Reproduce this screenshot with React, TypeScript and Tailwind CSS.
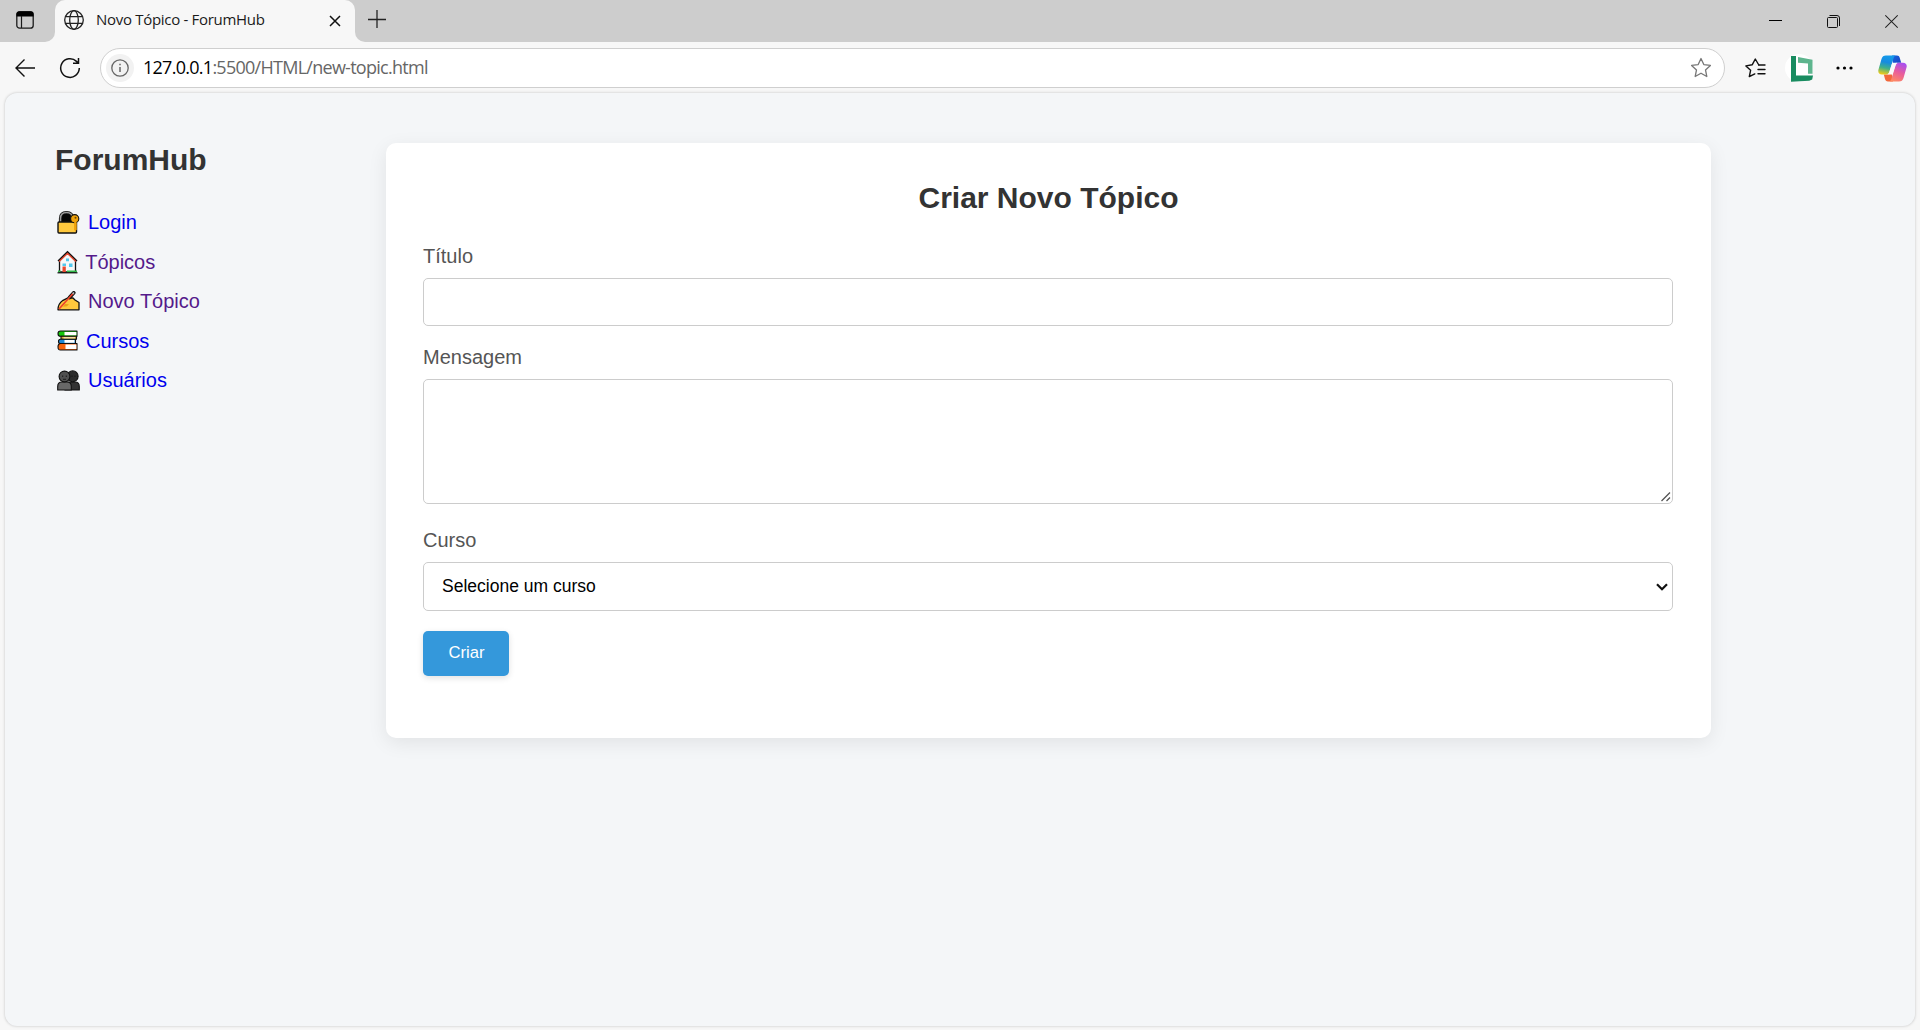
import React from "react";

type IconProps = { className?: string };

const TabActionsIcon = () => (
  <svg width="18" height="18" viewBox="0 0 18 18">
    <rect x="0.8" y="0.8" width="16.4" height="16.4" rx="2.8" fill="none" stroke="#1b1b1b" strokeWidth="1.3" />
    <path d="M0.5 5.5V3A2.8 2.8 0 0 1 3.3.2h11.4A2.8 2.8 0 0 1 17.5 3v2.5z" fill="#000" />
    <path d="M5.5 5v12" stroke="#1b1b1b" strokeWidth="1.2" />
  </svg>
);

const GlobeIcon = () => (
  <svg width="20" height="20" viewBox="0 0 20 20" fill="none" stroke="#222" strokeWidth="1.3">
    <circle cx="10" cy="10" r="9.3" />
    <ellipse cx="10" cy="10" rx="4.3" ry="9.3" />
    <path d="M1.5 6.7h17M1.5 13.3h17" />
  </svg>
);

const StarIcon = ({ className }: IconProps) => (
  <svg width="22" height="22" viewBox="0 0 22 22" fill="none" strokeWidth="1.3" strokeLinejoin="round" className={className}>
    <path d="M11 1.5l2.8 6.100 6.600.8-4.900 4.500 1.300 6.600-5.800-3.300-5.800 3.300 1.300-6.600-4.900-4.500 6.600-.8z" />
  </svg>
);

const FavoritesIcon = () => (
  <svg width="22" height="20" viewBox="0 0 22 20" fill="none" stroke="#111" strokeWidth="1.4" strokeLinejoin="round" strokeLinecap="round">
    <path d="M13.8 7L10.3 1 7.300 6.700.9 7.900l4.700 4.400-1.300 6.300 5.500-2.700" />
    <path d="M13.8 7H20M13 11.5h7M13 15.7h7" />
  </svg>
);

const ExtensionIcon = () => (
  <svg width="28" height="28" viewBox="0 0 28 28">
    <circle cx="14" cy="14" r="14" fill="#fff" />
    <path d="M6 2h5v19.500h17l-.8 4-3 1.200L6 27.800z" fill="#198c60" />
    <path d="M13 3l14.500 2.800v14H23V9.500L13 8.800z" fill="#5eb58e" />
  </svg>
);

const CopilotIcon = () => (
  <svg width="29" height="27" viewBox="0 0 29 27">
    <defs>
      <linearGradient id="cpA" x1="0.5" y1="0" x2="0.3" y2="1">
        <stop offset="0" stopColor="#159bea" />
        <stop offset="0.35" stopColor="#168be0" />
        <stop offset="0.65" stopColor="#3fb08a" />
        <stop offset="1" stopColor="#f3cc16" />
      </linearGradient>
      <linearGradient id="cpB" x1="0.7" y1="0" x2="0.3" y2="1">
        <stop offset="0" stopColor="#a84ff0" />
        <stop offset="0.5" stopColor="#e95d9b" />
        <stop offset="1" stopColor="#ff8a63" />
      </linearGradient>
      <linearGradient id="cpC" x1="0" y1="0" x2="1" y2="1">
        <stop offset="0" stopColor="#1767dd" />
        <stop offset="1" stopColor="#1c3fc0" />
      </linearGradient>
    </defs>
    <path d="M14 .5h5c1.500 0 2.300.9 2.700 2.200l1.500 5h-4.500c-2 0-3 .8-3.500 2.500z" fill="url(#cpC)" />
    <path d="M15 26.500h-5c-1.800 0-2.500-1-3-2.500l-1.200-4.500H10c2 0 3-1 3.500-2.500z" fill="#f2683b" />
    <path d="M8 .5h10c-1.400.3-2 1.300-2.500 3l-4.200 13.300c-.6 1.900-1.700 2.700-3.500 2.700H4c-3 0-4.300-2.200-3.500-5L3.500 4C4.200 1.600 5.600.5 8 .5z" fill="url(#cpA)" />
    <path d="M21 26.500H11c1.400-.3 2-1.300 2.500-3l4.200-13.300c.6-1.700 1.700-2.500 3.500-2.500H25c3 0 4.300 2 3.500 4.800L25.500 23c-.7 2.400-2.100 3.500-4.500 3.500z" fill="url(#cpB)" />
    <path d="M14.300 7.700h4.900c-1 .4-1.400 1.200-1.800 2.500l-3 9.300H9.600c1-.5 1.400-1.300 1.800-2.600z" fill="#fafafa" />
  </svg>
);

const LockEmoji = () => (
  <svg width="23" height="24" viewBox="0 0 23 24" strokeLinejoin="round">
    <path d="M3.500 12V8.500C3.500 4.500 6 2.500 9.500 2.500s6 2 6 6V12" fill="#050505" stroke="#111" strokeWidth="3.200" />
    <path d="M3.500 12V8.500c0-4 2.500-6 6-6s6 2 6 6" fill="none" stroke="#9b9b9b" strokeWidth="1.500" />
    <rect x="1" y="12" width="18.500" height="11" rx="1" fill="#ffc83d" stroke="#111" strokeWidth="1.400" />
    <path d="M17.200 11h2.300v9l-1.150 1-1.150-1z" fill="#efa30c" />
    <circle cx="17.700" cy="8.700" r="4.100" fill="#efa30c" stroke="#111" strokeWidth="1.100" />
    <path d="M17.200 12h2.300v8h-2.300z" fill="#efa30c" />
    <circle cx="18.500" cy="7.800" r="1" fill="#6a4706" />
  </svg>
);

const HouseEmoji = () => (
  <svg width="21" height="24" viewBox="0 0 21 24">
    <path d="M2.500 10.500L10.500 3l8 7.500V22h-16z" fill="#f7f7f7" stroke="#111" strokeWidth="1.300" />
    <path d="M1 11L10.500 1.700 20 11" fill="none" stroke="#111" strokeWidth="1.400" />
    <path d="M2.200 11.500L10.500 3.400l8.300 8.100" fill="none" stroke="#ed4b32" strokeWidth="1.300" />
    <path d="M9 8.500h3v2.800H9zM12 13.500h3.500V17H12zM5.500 13.500H9V16H5.500z" fill="#50c8ee" />
    <path d="M5.500 16.500h3.300V22H5.500z" fill="#e8472c" />
    <path d="M1 20.500h2.500v2H1zM10 20.500h10v2H10z" fill="#32b84a" />
    <path d="M.5 22.800h20" stroke="#111" strokeWidth="1.200" />
  </svg>
);

const WritingEmoji = () => (
  <svg width="23" height="20" viewBox="0 0 23 20" strokeLinejoin="round">
    <path d="M1 18.800c0-4 2-7.500 5-9.500l5-2.500 5 .2 2 2 4 2.500v7.300z" fill="#ffc83d" stroke="#111" strokeWidth="1.300" />
    <path d="M8 13l4 .3-2 2-4 .5z" fill="#e8a317" />
    <path d="M12.500 6.500L16.800 1.800" stroke="#111" strokeWidth="3.600" strokeLinecap="round" />
    <path d="M2 18L16 2.500" stroke="#ee432d" strokeWidth="1.700" />
    <path d="M15.700 2.900l1.300-1.400" stroke="#bbb" strokeWidth="1.700" />
  </svg>
);

const BooksEmoji = () => (
  <svg width="21" height="21" viewBox="0 0 21 21" strokeLinejoin="round">
    <g stroke="#111" strokeWidth="1.100">
      <path d="M3.500 1H20v5.300H3.500C1.500 6.300 1 5.500 1 3.700S1.600 1 3.500 1z" fill="#16c60c" />
      <path d="M4 6.300h15.500v3H4z" fill="#d9ac35" />
      <path d="M3.500 9.300h15v4.200h-15c-1.500 0-2-.8-2-2.100s.6-2.100 2-2.100z" fill="#1b87d5" />
      <path d="M3.500 13.500H20V20H3.500C1.600 20 1 19 1 16.800s.6-3.300 2.500-3.300z" fill="#f7630c" />
    </g>
    <path d="M7.500 2H19.400V5.300H7.500zM7.500 10.100h10v2.700h-10zM8.500 14.600H19.400v4.400H8.500z" fill="#fff" />
    <path d="M6.500 7.200H18v1.200H6.500z" fill="#fbecc0" />
  </svg>
);

const PeopleEmoji = () => (
  <svg width="23" height="21" viewBox="0 0 23 21" stroke="#111" strokeWidth="1.100">
    <path d="M8 20v-3.500c0-3 1.500-4.500 4-4.500h6c2.700 0 4.300 1.800 4.300 4.500V20z" fill="#333" />
    <circle cx="15.700" cy="6.300" r="5.400" fill="#2c2c2c" />
    <path d="M.7 20v-3.500C.7 13.700 2.300 12 5 12h5c2.700 0 4.300 1.700 4.300 4.500V20z" fill="#686868" />
    <circle cx="7.500" cy="6.500" r="5.400" fill="#505050" />
    <path d="M5.700 5.500v1.500M9.300 5.500v1.500M15 5.500v1.500M18 5.500v1.500M6 9.300h3" stroke="#151515" strokeWidth=".9" />
  </svg>
);

const links = [
  { label: "Login", icon: <LockEmoji />, box: "w-[33px]", row: "h-[39px]", color: "text-[#0000ee]" },
  { label: "Tópicos", icon: <HouseEmoji />, box: "w-[30.200px]", row: "h-[41px]", color: "text-[#551a8b]" },
  { label: "Novo Tópico", icon: <WritingEmoji />, box: "w-[33px]", row: "h-[38px]", color: "text-[#551a8b]" },
  { label: "Cursos", icon: <BooksEmoji />, box: "w-[31px]", row: "h-[41px]", color: "text-[#0000ee]" },
  { label: "Usuários", icon: <PeopleEmoji />, box: "w-[33px]", row: "h-[38px]", color: "text-[#0000ee]" },
];

function TabStrip() {
  return (
    <div className="flex h-[42px] bg-[#f7f7f7]">
      <div className="flex w-[55px] items-center rounded-br-[10px] bg-[#cdcdcd] pb-[2px] pl-4">
        <TabActionsIcon />
      </div>
      <div className="h-full w-[300px] bg-[#cdcdcd]">
        <div className="flex h-full items-center rounded-t-[10px] bg-[#f7f7f7] pb-[2px] pl-[9px]">
          <GlobeIcon />
          <span className="ml-[12px] w-[233px] pb-[2px] font-['Open_Sans'] text-[15px] tracking-[-0.300px] whitespace-nowrap text-[#1b1b1b]">
            Novo Tópico - ForumHub
          </span>
          <svg width="12" height="12" viewBox="0 0 12 12" className="mt-[1px]" stroke="#111" strokeWidth="1.500">
            <path d="M1 1l10 10M11 1L1 11" />
          </svg>
        </div>
      </div>
      <div className="flex flex-1 rounded-bl-[10px] bg-[#cdcdcd]">
        <svg width="18" height="18" viewBox="0 0 18 18" className="mt-[10px] ml-[13px]" stroke="#222" strokeWidth="1.300">
          <path d="M9 0v18M0 9.500h18" />
        </svg>
        <div className="mt-[14px] mr-[22px] ml-auto flex h-[15px] items-center gap-[45px]">
          <svg width="13" height="15" viewBox="0 0 13 15">
            <path d="M0 6.500h13" stroke="#000" />
          </svg>
          <svg width="13" height="15" viewBox="0 0 13 15" fill="none" stroke="#111">
            <rect x=".5" y="3.500" width="10" height="10" rx="1" />
            <path d="M2.500 1.500H10A2.500 2.500 0 0 1 12.500 4v8" />
          </svg>
          <svg width="13" height="15" viewBox="0 0 13 15" stroke="#222" strokeWidth="1.100">
            <path d="M.3 1.300l12.400 12.400M12.700 1.300L.3 13.700" />
          </svg>
        </div>
      </div>
    </div>
  );
}

function AddressBar() {
  return (
    <div className="flex h-[51px] items-center pt-px">
      <svg width="20" height="20" viewBox="0 0 20 20" className="ml-[15px]" fill="none" stroke="#111" strokeWidth="1.400">
        <path d="M20 10H1M9.500 1.500L1 10l8.500 8.500" />
      </svg>
      <svg width="22" height="22" viewBox="0 0 22 22" className="ml-[24px]" fill="none" stroke="#111" strokeWidth="1.500">
        <path d="M20.300 11a9.300 9.300 0 1 1-2.800-6.600l1.800 1.700M19.500 1v5.300H14" />
      </svg>
      <div className="ml-[19px] flex h-[40px] w-[1625px] items-center rounded-full border border-[#cfcfcf] bg-white pl-[5px]">
        <div className="flex size-[28px] items-center justify-center rounded-full bg-[#f2f2f2]">
          <svg width="18" height="18" viewBox="0 0 18 18" fill="none" stroke="#666" strokeWidth="1.300">
            <circle cx="9" cy="9" r="8.200" />
            <path d="M9 8v5M9 4.700v1.600" strokeWidth="1.500" />
          </svg>
        </div>
        <span className="ml-[9px] pb-px font-['Open_Sans'] text-[18px] tracking-[-0.730px] whitespace-nowrap text-[#666]">
          <span className="text-black">127.0.0.1</span>:5500/HTML/new-topic.html
        </span>
        <StarIcon className="mr-[12px] ml-auto stroke-[#777]" />
      </div>
      <div className="ml-[20px]">
        <FavoritesIcon />
      </div>
      <div className="ml-[18px]">
        <ExtensionIcon />
      </div>
      <svg width="17" height="4" viewBox="0 0 17 4" className="ml-[23px]">
        <circle cx="2" cy="2" r="1.600" />
        <circle cx="8.500" cy="2" r="1.600" />
        <circle cx="15" cy="2" r="1.600" />
      </svg>
      <div className="ml-[25px]">
        <CopilotIcon />
      </div>
    </div>
  );
}

export default function App() {
  return (
    <div className="flex h-[1030px] w-[1920px] flex-col overflow-hidden bg-[#f7f7f7] font-['Liberation_Sans',Arial,sans-serif]">
      <TabStrip />
      <AddressBar />
      <main className="mx-[5px] flex h-[933px] items-start rounded-[12px] bg-[#f4f6f8] shadow-[0_0_3px_rgba(0,0,0,0.220)]">
        <aside className="w-[381px] pt-[49px] pl-[50px]">
          <h1 className="text-[30px] leading-[35px] font-bold text-[#333]">ForumHub</h1>
          <nav className="mt-[25px] text-[20px]">
            {links.map((link) => (
              <a key={link.label} className={`flex items-center ${link.row} ${link.color}`}>
                <span className={`${link.box} shrink-0 pl-[2px]`}>{link.icon}</span>
                {link.label}
              </a>
            ))}
          </nav>
        </aside>
        <section className="mt-[50px] h-[595px] w-[1325px] rounded-[10px] bg-white px-[37px] pt-[37px] shadow-[0_5px_19px_rgba(0,0,0,0.080)]">
          <h2 className="text-center text-[30px] leading-[35px] font-bold text-[#333]">Criar Novo Tópico</h2>
          <form className="flex flex-col items-start text-[20px] leading-[23px] text-[#555]">
            <label className="mt-[30px]">Título</label>
            <input className="mt-[10px] h-[48px] w-[1250px] rounded-[5px] border border-[#ccc] bg-white" />
            <label className="mt-[20px]">Mensagem</label>
            <div className="relative mt-[10px] h-[125px]">
              <textarea className="block h-[125px] w-[1250px] resize-none rounded-[5px] border border-[#ccc] bg-white" />
              <svg width="10" height="10" viewBox="0 0 10 10" className="absolute right-[2px] bottom-[2px]" stroke="#555" strokeWidth="1.300">
                <path d="M.5 9L9 .5M5.500 9L9 5.500" />
              </svg>
            </div>
            <label className="mt-[25px]">Curso</label>
            <div className="relative mt-[10px] h-[49px]">
              <select className="block h-[49px] w-[1250px] appearance-none rounded-[5px] border border-[#ccc] bg-white px-[18px] pb-px text-[17.500px] text-black">
                <option>Selecione um curso</option>
              </select>
              <svg width="12" height="8" viewBox="0 0 12 8" className="absolute top-[21px] right-[5px]" fill="none" stroke="#111" strokeWidth="2.200">
                <path d="M1 1.200l5 5 5-5" />
              </svg>
            </div>
            <button type="button" className="mt-[20px] h-[45px] w-[86px] rounded-[5px] bg-[#3498db] pb-[2px] pl-px text-[16.670px] text-white shadow-[0_2px_6px_rgba(0,0,0,0.120)]">
              Criar
            </button>
          </form>
        </section>
      </main>
    </div>
  );
}
